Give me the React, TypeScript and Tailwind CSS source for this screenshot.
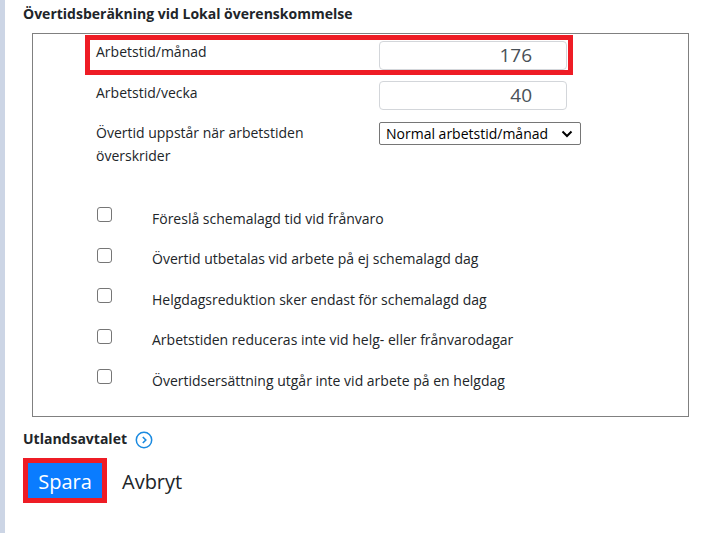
import React from 'react';

const options = [
  'Föreslå schemalagd tid vid frånvaro',
  'Övertid utbetalas vid arbete på ej schemalagd dag',
  'Helgdagsreduktion sker endast för schemalagd dag',
  'Arbetstiden reduceras inte vid helg- eller frånvarodagar',
  'Övertidsersättning utgår inte vid arbete på en helgdag',
];

function NumberField({ value }: { value: string }) {
  return (
    <div className="w-[188px] h-[29px] rounded-[4px] border border-[#d3d6da] bg-white flex items-center justify-end pr-[34px] text-[19px] text-[#495057] leading-none">
      {value}
    </div>
  );
}

function Box() {
  return <span className="block w-[15px] h-[15px] rounded-[3px] border border-[#767676] bg-white" />;
}

export default function App() {
  return (
    <div className="flex min-h-[533px] bg-white text-[#212529]" style={{ fontFamily: '"Open Sans", "Noto Sans", sans-serif' }}>
      <div className="w-[5px] shrink-0 bg-[#ccd5e5]" />
      <div className="pl-[18px] pt-[4px] flex-1">
        <h2 className="text-[14px] font-bold leading-[20px] text-[#212529]">
          Övertidsberäkning vid Lokal överenskommelse
        </h2>

        <div className="ml-[9px] mt-[9px] w-[657px] border border-[#808080] pt-[1px] pb-[15px] text-[14px]">
          {/* highlighted row */}
          <div className="ml-[52px] w-[488px] border-[5px] border-[#ee1c25] flex items-start h-[40px]">
            <div className="w-[289px] pl-[6px] leading-[24px]">Arbetstid/månad</div>
            <div className="mt-[1px]">
              <NumberField value="176" />
            </div>
          </div>

          <div className="ml-[57px] mt-[6px] flex items-start">
            <div className="w-[289px] pl-[6px] leading-[24px]">Arbetstid/vecka</div>
            <NumberField value="40" />
          </div>

          <div className="ml-[57px] mt-[12px] flex items-start">
            <div className="w-[289px] pl-[6px] leading-[22.5px] pr-[60px]">
              Övertid uppstår när arbetstiden överskrider
            </div>
            <div className="w-[202px] h-[23px] border border-[#767676] rounded-[2px] flex items-center justify-between pl-[6px] pr-[7px] text-black">
              <span>Normal arbetstid/månad</span>
              <svg width="12" height="8" viewBox="0 0 12 8">
                <path d="M1.5 1.5 L6 6 L10.5 1.5" fill="none" stroke="#000" strokeWidth="2" />
              </svg>
            </div>
          </div>

          <div className="mt-[31px] flex flex-col">
            {options.map((o) => (
              <div key={o} className="h-[40.5px] flex items-center pl-[64px] text-[#212529]">
                <div className="w-[55px] -mt-[7px]">
                  <Box />
                </div>
                <span>{o}</span>
              </div>
            ))}
          </div>
        </div>

        <div className="mt-[11px] flex items-center gap-[8px]">
          <span className="text-[14px] font-bold">Utlandsavtalet</span>
          <svg width="18" height="18" viewBox="0 0 18 18" className="mt-[3px]">
            <circle cx="9" cy="9" r="7.7" fill="none" stroke="#1a8ae0" strokeWidth="1.5" />
            <path d="M7.8 6 L10.8 9 L7.8 12" fill="none" stroke="#1a8ae0" strokeWidth="1.6" />
          </svg>
        </div>

        <div className="mt-[9px] flex items-center gap-[15px]">
          <div className="border-[5px] border-[#ee1c25]">
            <button className="w-[74px] h-[35px] bg-[#0a7cff] text-white text-[20px] leading-none pt-[3px]">Spara</button>
          </div>
          <span className="text-[20px] text-[#212529] pt-[3px]">Avbryt</span>
        </div>
      </div>
    </div>
  );
}
